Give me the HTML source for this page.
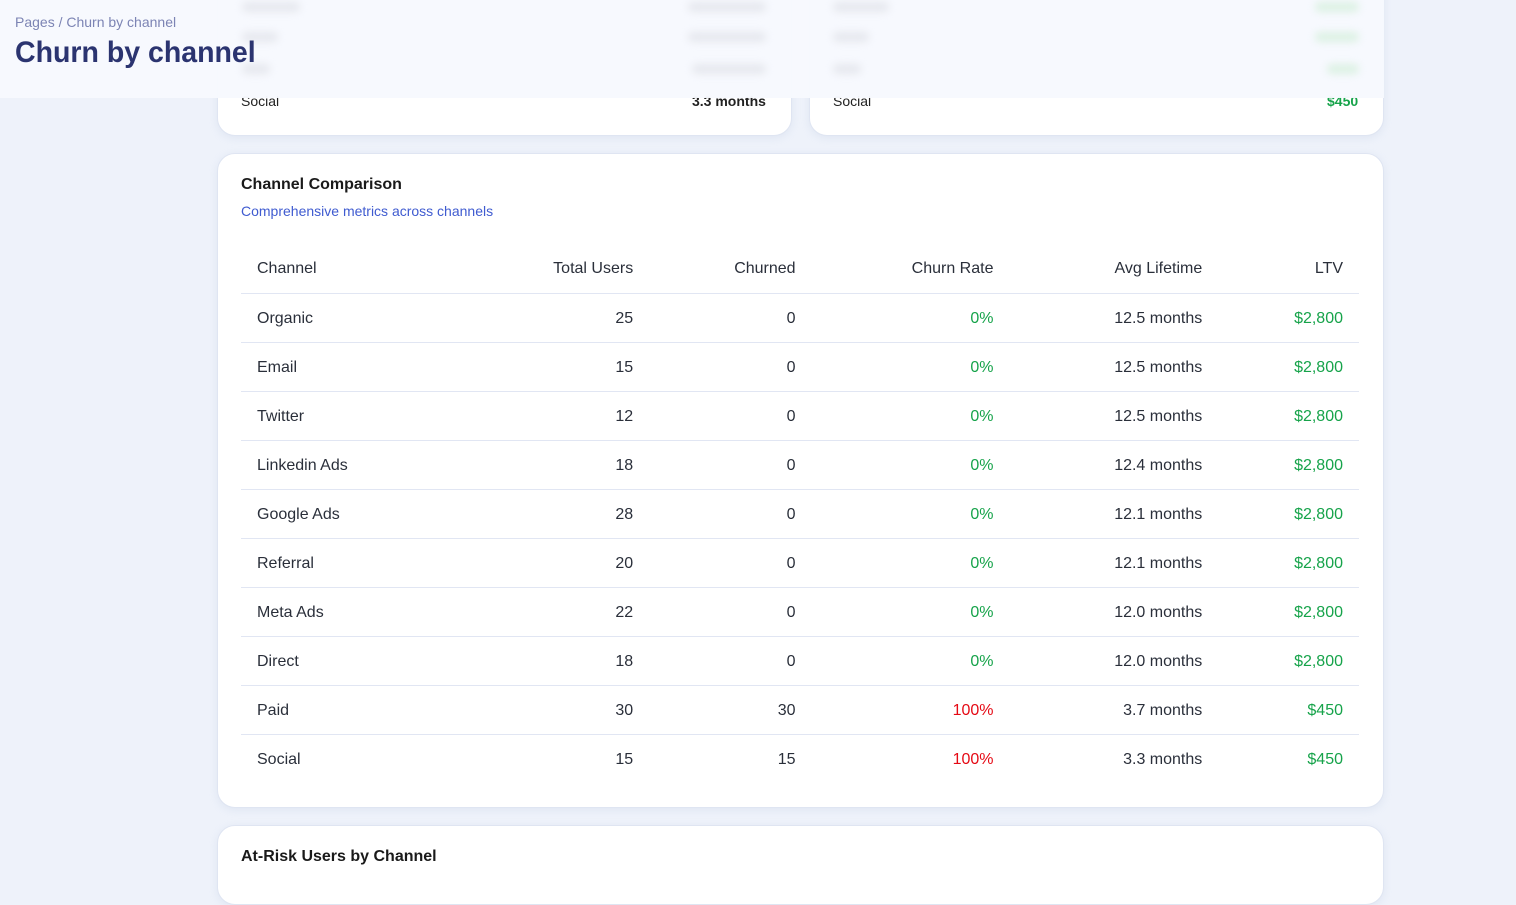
<!DOCTYPE html>
<html><head><meta charset="utf-8"><style>
*{box-sizing:border-box;margin:0;padding:0}
body{width:1516px;height:868px;overflow:hidden;background:#eef2fa;font-family:"Liberation Sans",sans-serif;position:relative}
.card{position:absolute;background:#fff;border-radius:18px;border:1px solid #dfe5f2;box-shadow:0 2px 8px rgba(180,195,225,.25)}
.hdr{position:absolute;left:0;top:0;width:1384px;height:98px;background:rgba(247,249,254,.97)}
.bc{position:absolute;left:15px;top:14px;font-size:14px;color:#7c84b4}
.h1{position:absolute;left:15px;top:36px;font-size:30px;font-weight:bold;color:#2b3470;transform:scaleX(0.95);transform-origin:left}
.t{position:absolute;font-size:14px;color:#222}
.bl{position:absolute;height:10px;border-radius:5px;filter:blur(4px);background:#e6e8ee}
table{position:absolute;left:241px;top:244px;width:1118px;border-collapse:collapse;font-size:16px;color:#2a2f3a}
td,th{height:49px;padding:0 16px;text-align:right;font-weight:normal;vertical-align:middle}
th{padding-top:2px}
td{padding-top:2px}
td:first-child,th:first-child{text-align:left}
tr{border-bottom:1px solid #e1e6f3}
tr:last-child{border-bottom:none}
.g{color:#16a34a}.r{color:#e50914}
</style></head><body>
<div class="card" style="left:217px;top:-30px;width:575px;height:166px"></div>
<div class="card" style="left:809px;top:-30px;width:575px;height:166px"></div>
<div class="t" style="left:241px;top:93px">Social</div>
<div class="t" style="left:692px;top:93px;font-weight:bold">3.3 months</div>
<div class="t" style="left:833px;top:93px">Social</div>
<div class="t" style="left:1327px;top:93px;font-weight:bold;color:#16a34a">$450</div>
<div class="hdr"></div>
<div class="bl" style="left:242px;top:2px;width:58px"></div>
<div class="bl" style="left:242px;top:32px;width:36px"></div>
<div class="bl" style="left:242px;top:64px;width:28px"></div>
<div class="bl" style="left:688px;top:2px;width:78px"></div>
<div class="bl" style="left:688px;top:32px;width:78px"></div>
<div class="bl" style="left:692px;top:64px;width:74px"></div>
<div class="bl" style="left:833px;top:2px;width:56px"></div>
<div class="bl" style="left:833px;top:32px;width:36px"></div>
<div class="bl" style="left:833px;top:64px;width:28px"></div>
<div class="bl" style="left:1315px;top:2px;width:44px;background:#dcf1e3"></div>
<div class="bl" style="left:1315px;top:32px;width:44px;background:#dcf1e3"></div>
<div class="bl" style="left:1327px;top:64px;width:32px;background:#dcf1e3"></div>
<div class="bc">Pages / Churn by channel</div>
<div class="h1">Churn by channel</div>
<div class="card" style="left:217px;top:153px;width:1167px;height:655px"></div>
<div style="position:absolute;left:241px;top:176px;font-size:16px;font-weight:bold;color:#1a1a1a">Channel Comparison</div>
<div style="position:absolute;left:241px;top:203px;font-size:14px;color:#3f5bd0">Comprehensive metrics across channels</div>
<table>
<tr><th>Channel</th><th>Total Users</th><th>Churned</th><th>Churn Rate</th><th>Avg Lifetime</th><th>LTV</th></tr>
<tr><td>Organic</td><td>25</td><td>0</td><td class="g">0%</td><td>12.5 months</td><td class="g">$2,800</td></tr>
<tr><td>Email</td><td>15</td><td>0</td><td class="g">0%</td><td>12.5 months</td><td class="g">$2,800</td></tr>
<tr><td>Twitter</td><td>12</td><td>0</td><td class="g">0%</td><td>12.5 months</td><td class="g">$2,800</td></tr>
<tr><td>Linkedin Ads</td><td>18</td><td>0</td><td class="g">0%</td><td>12.4 months</td><td class="g">$2,800</td></tr>
<tr><td>Google Ads</td><td>28</td><td>0</td><td class="g">0%</td><td>12.1 months</td><td class="g">$2,800</td></tr>
<tr><td>Referral</td><td>20</td><td>0</td><td class="g">0%</td><td>12.1 months</td><td class="g">$2,800</td></tr>
<tr><td>Meta Ads</td><td>22</td><td>0</td><td class="g">0%</td><td>12.0 months</td><td class="g">$2,800</td></tr>
<tr><td>Direct</td><td>18</td><td>0</td><td class="g">0%</td><td>12.0 months</td><td class="g">$2,800</td></tr>
<tr><td>Paid</td><td>30</td><td>30</td><td class="r">100%</td><td>3.7 months</td><td class="g">$450</td></tr>
<tr><td>Social</td><td>15</td><td>15</td><td class="r">100%</td><td>3.3 months</td><td class="g">$450</td></tr>
</table>
<div class="card" style="left:217px;top:825px;width:1167px;height:80px"></div>
<div style="position:absolute;left:241px;top:848px;font-size:16px;font-weight:bold;color:#1a1a1a">At-Risk Users by Channel</div>
</body></html>
